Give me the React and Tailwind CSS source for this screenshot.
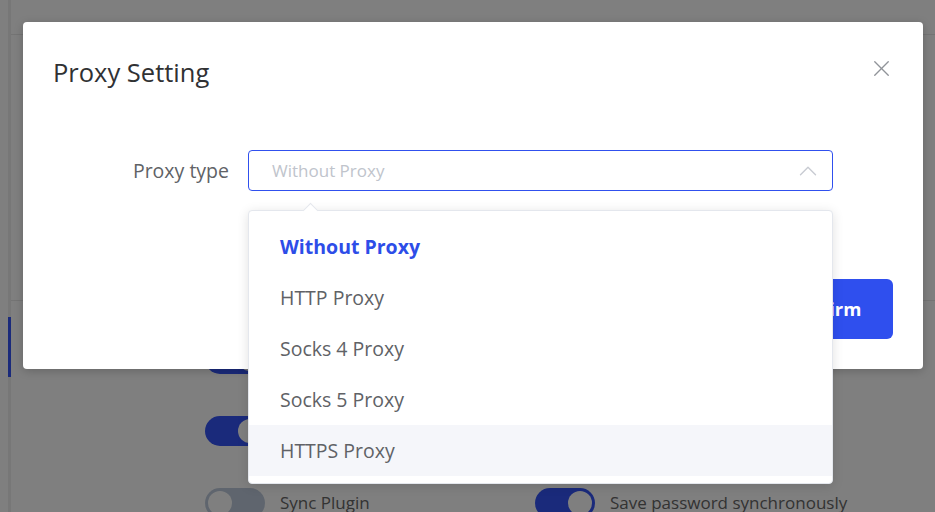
import React from "react";
import { X, ChevronUp } from "lucide-react";

const OPTIONS = ["Without Proxy", "HTTP Proxy", "Socks 4 Proxy", "Socks 5 Proxy", "HTTPS Proxy"];

function Toggle({ on }) {
  return (
    <div
      className={`w-[60px] h-[30px] shrink-0 rounded-full flex items-center px-[3px] ${
        on ? "bg-[#3454f6] justify-end" : "bg-[#bfcbdc] justify-start"
      }`}
    >
      <div className="w-[24px] h-[24px] rounded-full bg-white" />
    </div>
  );
}

export default function App() {
  return (
    <div
      className="relative w-[935px] h-[512px] overflow-hidden bg-white"
      style={{ fontFamily: "'Open Sans', 'Noto Sans', sans-serif" }}
    >
      {/* page behind the dialog */}
      <div className="flex h-full">
        <div className="w-[8px]" />
        <div className="w-[3px] bg-[#eeeeee] pt-[317px]">
          <div className="h-[60px] bg-[#3454f6]" />
        </div>
        <div className="flex-1 flex flex-col">
          <div className="h-[35px] shrink-0 border-b border-[#e8e8e8]" />
          <div className="h-[266px] shrink-0 border-b border-[#e8e8e8]" />
          <div className="pl-[194px] pt-[43px] flex flex-col gap-[42px] shrink-0">
            <div className="flex items-center gap-[15px]">
              <Toggle on />
            </div>
            <div className="flex items-center gap-[15px]">
              <Toggle on />
            </div>
            <div className="flex items-center">
              <div className="w-[330px] flex items-center gap-[15px]">
                <Toggle />
                <span className="text-[17px] text-[#666666]">Sync Plugin</span>
              </div>
              <div className="flex items-center gap-[15px]">
                <Toggle on />
                <span className="text-[17px] text-[#666666]">Save password synchronously</span>
              </div>
            </div>
          </div>
        </div>
      </div>

      {/* overlay */}
      <div className="absolute inset-0 bg-black/50" />

      {/* dialog */}
      <div className="absolute left-[23px] top-[22px] w-[900px] h-[347px] bg-white rounded-[4px] shadow-[0_2px_10px_rgba(0,0,0,0.2)] px-[30px] pt-[34px]">
        <div className="flex items-center justify-between h-[32px]">
          <h2 className="text-[25.5px] leading-[32px] text-[#303133]">Proxy Setting</h2>
          <X size={27} strokeWidth={1.2} className="text-[#909399] -mr-[2px] -mt-[8px]" />
        </div>

        <div className="flex items-center mt-[62px]">
          <label className="w-[176px] text-right text-[19.5px] text-[#606266]">Proxy type</label>
          <div className="ml-[19px] w-[585px] h-[41px] border border-[#3050ee] rounded-[4px] flex items-center justify-between pl-[23px] pr-[9px]">
            <span className="text-[17px] text-[#c0c4cc]">Without Proxy</span>
            <ChevronUp size={30} strokeWidth={1.1} className="text-[#c8cbd2]" />
          </div>
        </div>

        <div className="flex justify-end mt-[88px]">
          <button className="w-[138px] h-[60px] rounded-[6px] bg-[#2f4fee] text-white text-[18.5px] font-bold">
            Confirm
          </button>
        </div>
      </div>

      {/* dropdown */}
      <div className="absolute left-[248px] top-[210px] w-[585px] h-[274px] bg-white border border-[#e4e7ed] rounded-[4px] shadow-[0_2px_12px_rgba(0,0,0,0.12)] pt-[10px]">
        <div className="absolute -top-[6px] left-[56px] w-[11px] h-[11px] bg-white border-l border-t border-[#e4e7ed] rotate-45" />
        {OPTIONS.map((o, i) => (
          <div
            key={o}
            className={`h-[51px] flex items-center pl-[31px] text-[19.5px] ${
              i === 0 ? "font-bold text-[#2d4de8]" : "text-[#606266]"
            } ${i === 4 ? "bg-[#f5f6fa]" : ""}`}
          >
            {o}
          </div>
        ))}
      </div>
    </div>
  );
}
